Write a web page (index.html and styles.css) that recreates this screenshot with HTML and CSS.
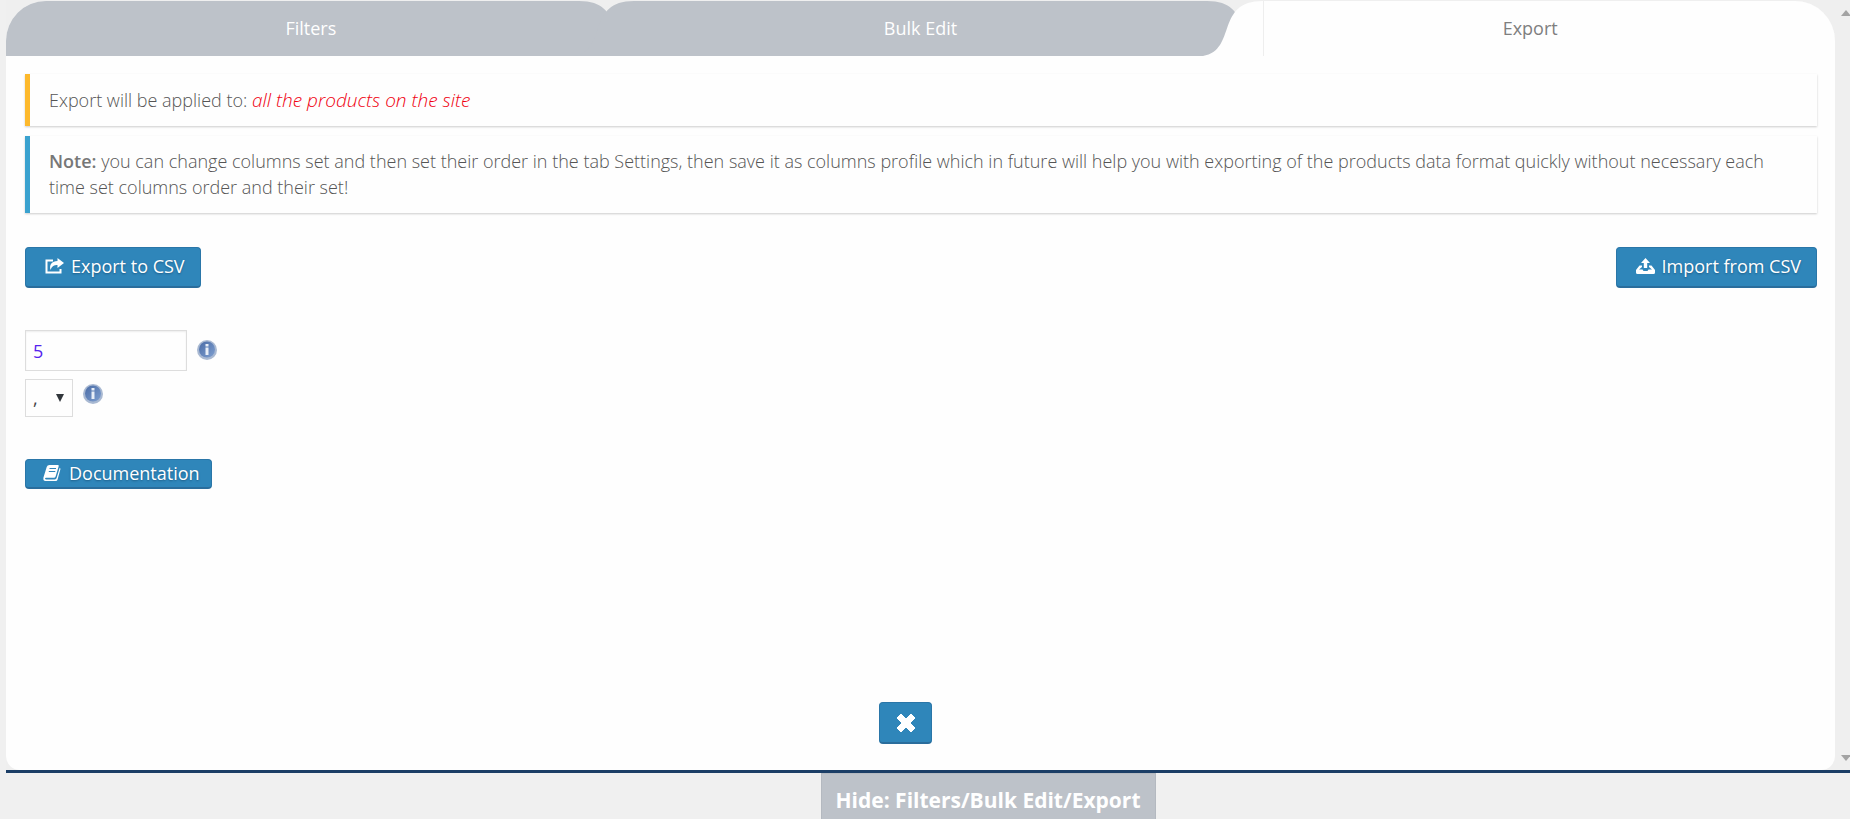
FILE: index.html
```html
<!DOCTYPE html>
<html lang="en">
<head>
    <meta charset="UTF-8">
    <meta name="viewport" content="width=device-width, initial-scale=1.0">
    <title>Export</title>
    <link rel="stylesheet" href="styles.css">
</head>
<body>
    <div class="top_panel">
        <div class="panel">
            <nav class="tabs">
                <a href="#filters" class="tab tab_first">
                    <svg class="edge edge_right" viewBox="0 0 80 60" preserveAspectRatio="none"><path d="M80,60C34,53.5,64.417,0,0,0v60H80z"/></svg>
                    <span>Filters</span>
                </a>
                <a href="#bulk" class="tab tab_middle">
                    <svg class="edge edge_left" viewBox="0 0 80 60" preserveAspectRatio="none"><path d="M0,60C46,53.5,15.583,0,80,0v60H0z"/></svg>
                    <svg class="edge edge_right" viewBox="0 0 80 60" preserveAspectRatio="none"><path d="M80,60C34,53.5,64.417,0,0,0v60H80z"/></svg>
                    <span>Bulk Edit</span>
                </a>
                <a href="#export" class="tab tab_last on">
                    <svg class="edge edge_left" viewBox="0 0 80 60" preserveAspectRatio="none"><path d="M0,60C46,53.5,15.583,0,80,0v60H0z"/></svg>
                    <span>Export</span>
                </a>
            </nav>

            <div class="content">
                <div class="notice notice_warning">Export will be applied to: <em>all the products on the site</em></div>
                <div class="notice notice_info"><strong>Note:</strong> you can change columns set and then set their order in the tab Settings, then save it as columns profile which in future will help you with exporting of the products data format quickly without necessary each time set columns order and their set!</div>

                <div class="actions">
                    <button type="button" class="button">
                        <svg class="icon" viewBox="0 0 19 16"><path d="M8 2.500H1.500V14.500H15.500V11" fill="none" stroke="#fff" stroke-width="2"/><path d="M12.500 0l6.500 5-6.500 5V7C9 7 7 8 5.500 12 4 6.500 7 3 12.500 3z"/></svg>
                        Export to CSV
                    </button>
                    <button type="button" class="button">
                        <svg class="icon" viewBox="0 0 19 16"><path d="M9.500 0l4.500 5h-2.800v5H7.800V5H5z"/><path d="M3.500 7.500h2.500v1.500L3 11.500h3.500l1 1.500h4l1-1.500H16L13 9V7.500h2.500L19 12v2.500q0 1.500-1.500 1.500h-16Q0 16 0 14.500V12z"/></svg>
                        Import from CSV
                    </button>
                </div>

                <div class="fields">
                    <div class="row">
                        <input type="text" class="text" value="5" aria-label="Rows count">
                        <svg class="info" viewBox="0 0 20 20">
                            <defs>
                                <linearGradient id="ball" x1="0" y1="0" x2="1" y2="1">
                                    <stop offset="0" stop-color="#4a6ca6"/>
                                    <stop offset="1" stop-color="#7f9fd0"/>
                                </linearGradient>
                            </defs>
                            <circle cx="10" cy="10" r="10" fill="#a9b9d2"/><circle cx="10" cy="9.500" r="8" fill="url(#ball)"/><path d="M8.500 4h3v2.500h-3zM8.500 7.500h3v7.500h-3z" fill="#e8eef7"/>
                        </svg>
                    </div>
                    <div class="row">
                        <span class="select">
                            <select aria-label="Delimiter"><option>,</option><option>;</option></select>
                            <svg viewBox="0 0 8 8"><path d="M0 0h8L4 8z"/></svg>
                        </span>
                        <svg class="info" viewBox="0 0 20 20"><circle cx="10" cy="10" r="10" fill="#a9b9d2"/><circle cx="10" cy="9.500" r="8" fill="url(#ball)"/><path d="M8.500 4h3v2.500h-3zM8.500 7.500h3v7.500h-3z" fill="#e8eef7"/></svg>
                    </div>
                </div>

                <a href="#docs" class="button button_small">
                    <svg class="icon" viewBox="0 0 19 16"><path d="M6.500 0h8.300q1.300 0 .9 1.300L12.600 11.500q-.4 1.300-1.700 1.300H3q-1 0-1 .8t1 .8h8.900q1.300 0 1.700-1.300L16.700 2.700q1 .5.700 1.600L14.600 14.500Q14.200 16 12.600 16H2.500Q0 16 .4 12.700L3.700 2Q4.300 0 6.500 0z"/><path d="M6.500 3.500h6.500M5.800 6.500h6.500" stroke="#2f86ba" stroke-width="1"/></svg>
                    Documentation
                </a>
            </div>

            <div class="close_bar">
                <button type="button" class="button button_close" aria-label="Close">
                    <svg viewBox="0 0 20 20"><path d="M5 1l5 5 5-5 4 4-5 5 5 5-4 4-5-5-5 5-4-4 5-5-5-5z" stroke="#fff" stroke-linejoin="round"/></svg>
                </button>
            </div>
        </div>
        <div class="scroll">
            <svg viewBox="0 0 10 6"><path d="M0 6L5 0l5 6z"/></svg>
            <svg viewBox="0 0 10 6"><path d="M0 0h10L5 6z"/></svg>
        </div>
    </div>
    <div class="bottom_bar">
        <button type="button" class="toggle">Hide: Filters/Bulk Edit/Export</button>
    </div>
</body>
</html>
```
FILE: styles.css
```css
* {
    box-sizing: border-box;
    margin: 0;
    padding: 0;
}
html, body {
    height: 100%;
}
body {
    display: flex;
    flex-direction: column;
    padding-left: 6px;
    background: #f0f0f0;
    color: #7f7f7f;
    font: 18px/26px "Open Sans", sans-serif;
    overflow: hidden;
}
a {
    text-decoration: none;
}
.top_panel {
    flex: 1;
    display: flex;
    padding-top: 1px;
    border-bottom: 3px solid #1b3e66;
    background: #efefef;
}
.panel {
    flex: 1;
    display: flex;
    flex-direction: column;
    border-radius: 40px 40px 14px 14px;
    background: #fefefe;
}

/* tabs */
.tabs {
    display: flex;
    height: 55px;
    border-radius: 40px 40px 0 0;
    background: #efefef;
    overflow: hidden;
}
.tab {
    flex: 1;
    position: relative;
    display: flex;
    align-items: center;
    justify-content: center;
    padding-bottom: 2px;
    color: #fff;
    fill: #bdc2c9;
}
.tab::before {
    content: "";
    position: absolute;
    top: 0;
    bottom: 0;
    left: 0;
    right: 0;
    background: #bdc2c9;
}
.tab_first::before {
    right: 37px;
}
.tab_middle::before {
    left: 18px;
    right: 18px;
}
.tab_last::before {
    left: 38px;
}
.tab span {
    position: relative;
}
.edge {
    position: absolute;
    top: 0;
    width: 60px;
    height: 100%;
}
.tab_first .edge_right {
    right: -23px;
}
.tab_middle .edge_left {
    left: -42px;
}
.tab_middle .edge_right {
    right: -42px;
}
.tab_last .edge_left {
    left: -22px;
}
.tab.on {
    color: #7f7f7f;
    fill: #fefefe;
}
.tab.on::before {
    background: #fefefe;
    border-left: 1px solid #eee;
}

/* content */
.content {
    flex: 1;
    padding: 18px 18px 0 19px;
}
.notice {
    margin-bottom: 10px;
    padding: 13px 19px;
    border-left: 5px solid #fdb92c;
    box-shadow: 0 1px 2px rgba(0, 0, 0, 0.2);
    color: #555;
    font-weight: 300;
}
.notice em {
    color: #f00010;
    font-size: 19px;
}
.notice strong {
    color: #777;
    font-weight: 600;
}
.notice_info {
    padding-top: 12px;
    border-color: #3aa2cf;
}
.actions {
    display: flex;
    justify-content: space-between;
    margin-top: 34px;
}
.button {
    display: inline-flex;
    align-items: center;
    height: 41px;
    padding: 0 15px 3px 19px;
    border: 1px solid #2a76a8;
    border-bottom: 2px solid #2a6d9c;
    border-radius: 4px;
    background: #2f86ba;
    color: #fff;
    fill: #fff;
    font: 18px/26px "Open Sans", sans-serif;
    text-shadow: 0 1px 2px #1d5d87;
    cursor: pointer;
}
.icon {
    width: 19px;
    height: 16px;
    margin-right: 7px;
}
.button_small {
    height: 30px;
    padding: 0 11px 1px 17px;
}
.fields {
    margin: 42px 0;
}
.row {
    display: flex;
    margin-bottom: 8px;
}
.text {
    width: 162px;
    height: 41px;
    padding: 0 7px;
    border: 1px solid #ddd;
    background: #fefefe;
    box-shadow: inset 0 1px 2px rgba(0, 0, 0, 0.07);
    color: #5522ee;
    font: 18px/26px "Open Sans", sans-serif;
}
.info {
    width: 20px;
    height: 20px;
    margin: 10px 0 0 10px;
}
.row + .row .info {
    margin-top: 5px;
}
.select {
    position: relative;
}
.select select {
    display: block;
    width: 48px;
    height: 38px;
    padding: 0 7px;
    border: 1px solid #ddd;
    border-radius: 0;
    background: #fefefe;
    color: #444;
    font: 18px/26px "Open Sans", sans-serif;
    appearance: none;
}
.select svg {
    position: absolute;
    top: 15px;
    right: 9px;
    width: 8px;
    height: 8px;
    fill: #32373c;
    pointer-events: none;
}
.close_bar {
    padding: 0 30px 26px 0;
    text-align: center;
}
.button_close {
    justify-content: center;
    width: 53px;
    height: 42px;
    padding: 0;
}
.button_close svg {
    width: 20px;
    height: 20px;
}
.scroll {
    display: flex;
    flex-direction: column;
    justify-content: space-between;
    width: 15px;
    padding: 9px 0 9px 6px;
    overflow: hidden;
    fill: #a3a3a3;
}
.scroll svg {
    flex: none;
    width: 10px;
    height: 6px;
}

/* bottom */
.bottom_bar {
    display: flex;
    justify-content: center;
    height: 46px;
    padding-left: 120px;
}
.toggle {
    width: 335px;
    border: 1px solid #b4b9c0;
    border-bottom: 0;
    background: #bdc2c9;
    color: #fff;
    font: bold 21px/30px "Open Sans", sans-serif;
    padding-top: 6px;
    cursor: pointer;
}
```
